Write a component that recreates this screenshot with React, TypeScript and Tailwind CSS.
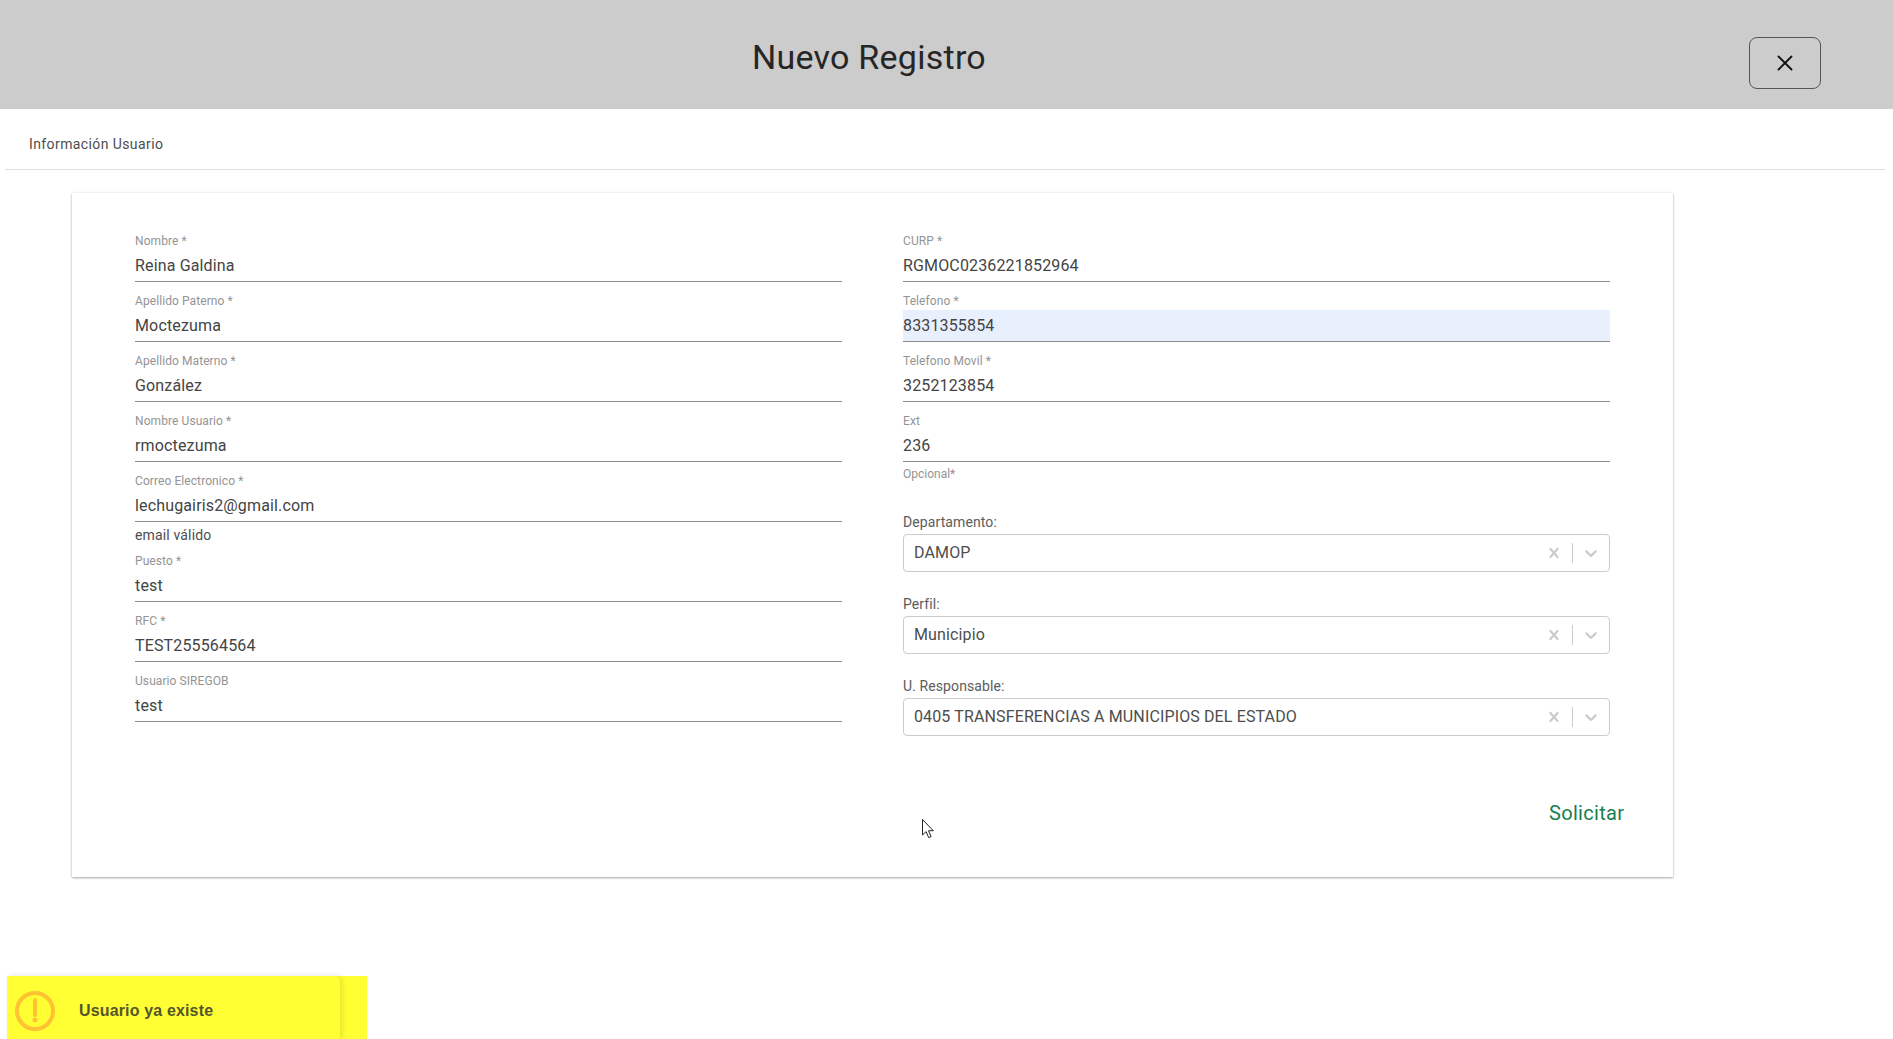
import React from 'react';
import { X } from 'lucide-react';

const Field = ({ label, value, autofill }: { label: string; value: string; autofill?: boolean }) => (
  <div className="h-[60px] flex flex-col justify-end">
    <label className="text-[12px] leading-[14px] mb-[2px] tracking-[0.08px] text-[#949494]">{label}</label>
    <div className={`h-[32px] border-b border-[#8c8c8c] flex items-center pt-[1px] text-[16px] tracking-[0.15px] text-[#444444] ${autofill ? 'bg-[#e8f0fe]' : ''}`}>
      {value}
    </div>
  </div>
);

const SelectField = ({ label, value }: { label: string; value: string }) => (
  <div className="mt-[12px] h-[70px] flex flex-col justify-end">
    <label className="text-[14px] leading-[20px] mb-[2px] tracking-[0.1px] text-[#5c5c5c]">{label}</label>
    <div className="h-[38px] border border-[#cccccc] rounded-[4px] flex items-center">
      <span className="flex-1 pl-[10px] text-[16px] tracking-[0.13px] text-[#4d4d4d]">{value}</span>
      <svg width="20" height="20" viewBox="0 0 20 20" className="fill-[#cccccc] mx-[8px]">
        <path d="M14.348 14.849c-0.469 0.469-1.229 0.469-1.697 0l-2.651-3.030-2.651 3.029c-0.469 0.469-1.229 0.469-1.697 0-0.469-0.469-0.469-1.229 0-1.697l2.758-3.15-2.759-3.152c-0.469-0.469-0.469-1.228 0-1.697s1.228-0.469 1.697 0l2.652 3.031 2.651-3.031c0.469-0.469 1.228-0.469 1.697 0s0.469 1.229 0 1.697l-2.758 3.152 2.758 3.15c0.469 0.469 0.469 1.229 0 1.697z" />
      </svg>
      <span className="w-px h-[20px] bg-[#cccccc]" />
      <svg width="20" height="20" viewBox="0 0 20 20" className="fill-[#cccccc] mx-[8px]">
        <path d="M4.516 7.548c0.436-0.446 1.043-0.481 1.576 0l3.908 3.747 3.908-3.747c0.533-0.481 1.141-0.446 1.576 0 0.436 0.445 0.408 1.197 0 1.615-0.406 0.418-4.695 4.502-4.695 4.502-0.217 0.223-0.502 0.335-0.789 0.335s-0.572-0.112-0.791-0.335c0 0-4.287-4.084-4.695-4.502s-0.436-1.17 0-1.615z" />
      </svg>
    </div>
  </div>
);

export default function App() {
  return (
    <div className="relative h-[1039px] overflow-hidden bg-white font-['Roboto',sans-serif]">
      <div className="h-[109px] bg-[#cccccc] flex items-start">
        <h1 className="w-[1738px] text-center text-[34px] leading-[40px] pt-[37px] tracking-[0.25px] font-normal text-[#262626]">Nuevo Registro</h1>
        <button className="ml-[11px] mt-[37px] w-[72px] h-[52px] border border-[#555555] rounded-[8px] flex items-center justify-center">
          <X size={26} strokeWidth={1.7} className="text-[#111111]" />
        </button>
      </div>

      <div className="ml-[5px] w-[1880px] h-[61px] border-b border-[#e0e0e0] pl-[24px] pt-[26px] text-[14px] leading-[19px] tracking-[0.4px] text-[#4d4d4d]">
        Información Usuario
      </div>

      <div className="ml-[72px] mt-[23px] w-[1601px] h-[684px] bg-white shadow-[0_1px_2px_rgba(0,0,0,0.32),0_0_3px_rgba(0,0,0,0.08)] pt-[29px] pl-[63px]">
        <div className="grid grid-cols-[707px_707px] gap-x-[61px]">
          <div>
            <Field label="Nombre *" value="Reina Galdina" />
            <Field label="Apellido Paterno *" value="Moctezuma" />
            <Field label="Apellido Materno *" value="González" />
            <Field label="Nombre Usuario *" value="rmoctezuma" />
            <Field label="Correo Electronico *" value="lechugairis2@gmail.com" />
            <p className="h-[20px] text-[14px] leading-[27px] tracking-[0.15px] text-[#4d4d4d]">email válido</p>
            <Field label="Puesto *" value="test" />
            <Field label="RFC *" value="TEST255564564" />
            <Field label="Usuario SIREGOB" value="test" />
          </div>
          <div>
            <Field label="CURP *" value="RGMOC0236221852964" />
            <Field label="Telefono *" value="8331355854" autofill />
            <Field label="Telefono Movil *" value="3252123854" />
            <Field label="Ext" value="236" />
            <p className="h-[28px] text-[12px] leading-[25px] text-[#949494]">Opcional*</p>
            <SelectField label="Departamento:" value="DAMOP" />
            <SelectField label="Perfil:" value="Municipio" />
            <SelectField label="U. Responsable:" value="0405 TRANSFERENCIAS A MUNICIPIOS DEL ESTADO" />
          </div>
        </div>
      </div>

      {/* solicitar sits over the card footer */}
      <button className="absolute left-[1549px] top-[799px] text-[20px] leading-[28px] tracking-[0.3px] text-[#16804f]">Solicitar</button>

      {/* mouse pointer caught in the screenshot */}
      <svg className="absolute left-[921px] top-[818px]" width="14" height="22" viewBox="0 0 14 22">
        <path d="M1.5 1.5V17l3.6-3.4 2.6 6 2.4-1-2.6-5.9h4.8z" fill="#ffffff" stroke="#222222" strokeWidth="1" />
      </svg>

      {/* toast */}
      <div className="absolute left-[7px] top-[976px] w-[360px] h-[63px] bg-[#ffff33]">
        <div className="w-[333px] h-[63px] rounded-tr-[6px] shadow-[2px_0_6px_rgba(0,0,0,0.12)] flex items-center pl-[8px] pt-[7px]">
          <svg width="40" height="40" viewBox="0 0 40 40" className="shrink-0">
            <circle cx="20" cy="20" r="18" fill="none" stroke="#ffc233" strokeWidth="4" />
            <path d="M20 9v15" stroke="#ffc233" strokeWidth="4" strokeLinecap="round" />
            <circle cx="20" cy="29" r="2.5" fill="#ffc233" />
          </svg>
          <span className="ml-[24px] font-['Liberation_Sans',sans-serif] font-bold text-[16px] tracking-[0.15px] text-[#55552a]">Usuario ya existe</span>
        </div>
      </div>
    </div>
  );
}
